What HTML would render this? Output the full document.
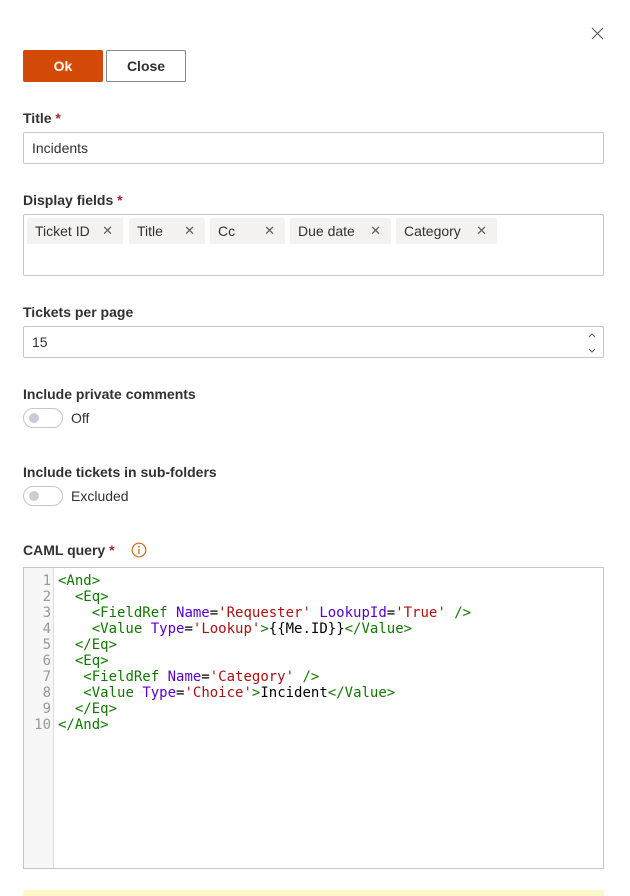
<!DOCTYPE html>
<html><head><meta charset="utf-8"><style>
*{box-sizing:border-box;margin:0;padding:0}
body{width:630px;height:896px;background:#fff;font-family:"Liberation Sans",sans-serif;color:#323130;position:relative;overflow:hidden}
.a{position:absolute}
.lbl{font-size:14px;font-weight:bold;color:#323130}
.req{color:#a4262c}
.box{border:1px solid #c8c6c4;border-radius:2px;background:#fff}
.chip{position:absolute;top:3px;height:26px;background:#f3f2f1;border-radius:2px;font-size:14px;line-height:26px;padding-left:8px}
.chip span{position:absolute;right:10px;top:0;color:#605e5c;font-size:13px}
.tog{position:absolute;width:40px;height:20px;border:1px solid #8a8886;border-radius:10px;border-color:#c8c6c4}
.tog:after{content:"";position:absolute;left:5px;top:4px;width:10px;height:10px;border-radius:50%;background:#c8cdd6}
pre{font-family:"DejaVu Sans Mono","Liberation Mono",monospace;font-size:14px;line-height:16px}
.t{color:#170}.n{color:#50c}.s{color:#a11}
</style></head><body>
<svg class="a" style="left:591px;top:27px" width="13" height="13"><path d="M1 1L12 12M12 1L1 12" stroke="#605e5c" stroke-width="1.2"/></svg>
<div class="a" style="left:23px;top:50px;width:80px;height:32px;background:#d24a05;border-radius:2px;color:#fff;font-weight:bold;font-size:14px;text-align:center;line-height:32px">Ok</div>
<div class="a" style="left:106px;top:50px;width:80px;height:32px;border:1px solid #8a8886;border-radius:2px;font-weight:bold;font-size:14px;text-align:center;line-height:30px">Close</div>
<div class="a lbl" style="left:23px;top:110px">Title <span class="req">*</span></div>
<div class="a box" style="left:23px;top:132px;width:581px;height:32px;font-size:14px;line-height:30px;padding-left:8px">Incidents</div>
<div class="a lbl" style="left:23px;top:192px">Display fields <span class="req">*</span></div>
<div class="a box" style="left:23px;top:214px;width:581px;height:62px">
<div class="chip" style="left:3px;width:96px">Ticket ID<span>✕</span></div>
<div class="chip" style="left:105px;width:76px">Title<span>✕</span></div>
<div class="chip" style="left:186px;width:75px">Cc<span>✕</span></div>
<div class="chip" style="left:266px;width:101px">Due date<span>✕</span></div>
<div class="chip" style="left:372px;width:101px">Category<span>✕</span></div>
</div>
<div class="a lbl" style="left:23px;top:304px">Tickets per page</div>
<div class="a box" style="left:23px;top:326px;width:581px;height:32px;font-size:14px;line-height:30px;padding-left:8px">15
<svg class="a" style="right:7px;top:5px" width="8" height="22"><path d="M1 5L4 2L7 5M1 17L4 20L7 17" stroke="#605e5c" fill="none"/></svg></div>
<div class="a lbl" style="left:23px;top:386px">Include private comments</div>
<div class="tog" style="left:23px;top:408px"></div>
<div class="a" style="left:71px;top:410px;font-size:14px">Off</div>
<div class="a lbl" style="left:23px;top:464px">Include tickets in sub-folders</div>
<div class="tog" style="left:23px;top:486px"></div>
<div class="a" style="left:71px;top:488px;font-size:14px">Excluded</div>
<div class="a lbl" style="left:23px;top:542px">CAML query <span class="req">*</span></div>
<svg class="a" style="left:131px;top:542px" width="16" height="16"><circle cx="8" cy="8" r="6.8" fill="none" stroke="#d26a1e" stroke-width="1.2"/><path d="M8 7V12" stroke="#d26a1e" stroke-width="1.3"/><circle cx="8" cy="4.8" r=".9" fill="#d26a1e"/></svg>
<div class="a box" style="left:23px;top:567px;width:581px;height:302px;border-radius:0">
<div class="a" style="left:0;top:0;width:30px;height:300px;background:#f7f7f7;border-right:1px solid #ddd"></div>
<pre class="a" style="left:0;top:5px;width:27px;text-align:right;color:#999">1
2
3
4
5
6
7
8
9
10</pre>
<pre class="a" style="left:34px;top:5px;color:#000"><span class="t">&lt;And&gt;</span>
  <span class="t">&lt;Eq&gt;</span>
    <span class="t">&lt;FieldRef</span> <span class="n">Name</span>=<span class="s">'Requester'</span> <span class="n">LookupId</span>=<span class="s">'True'</span> <span class="t">/&gt;</span>
    <span class="t">&lt;Value</span> <span class="n">Type</span>=<span class="s">'Lookup'</span><span class="t">&gt;</span>{{Me.ID}}<span class="t">&lt;/Value&gt;</span>
  <span class="t">&lt;/Eq&gt;</span>
  <span class="t">&lt;Eq&gt;</span>
   <span class="t">&lt;FieldRef</span> <span class="n">Name</span>=<span class="s">'Category'</span> <span class="t">/&gt;</span>
   <span class="t">&lt;Value</span> <span class="n">Type</span>=<span class="s">'Choice'</span><span class="t">&gt;</span>Incident<span class="t">&lt;/Value&gt;</span>
  <span class="t">&lt;/Eq&gt;</span>
<span class="t">&lt;/And&gt;</span></pre>
</div>
<div class="a" style="left:23px;top:890px;width:581px;height:6px;background:#fff8c9"></div>
</body></html>
